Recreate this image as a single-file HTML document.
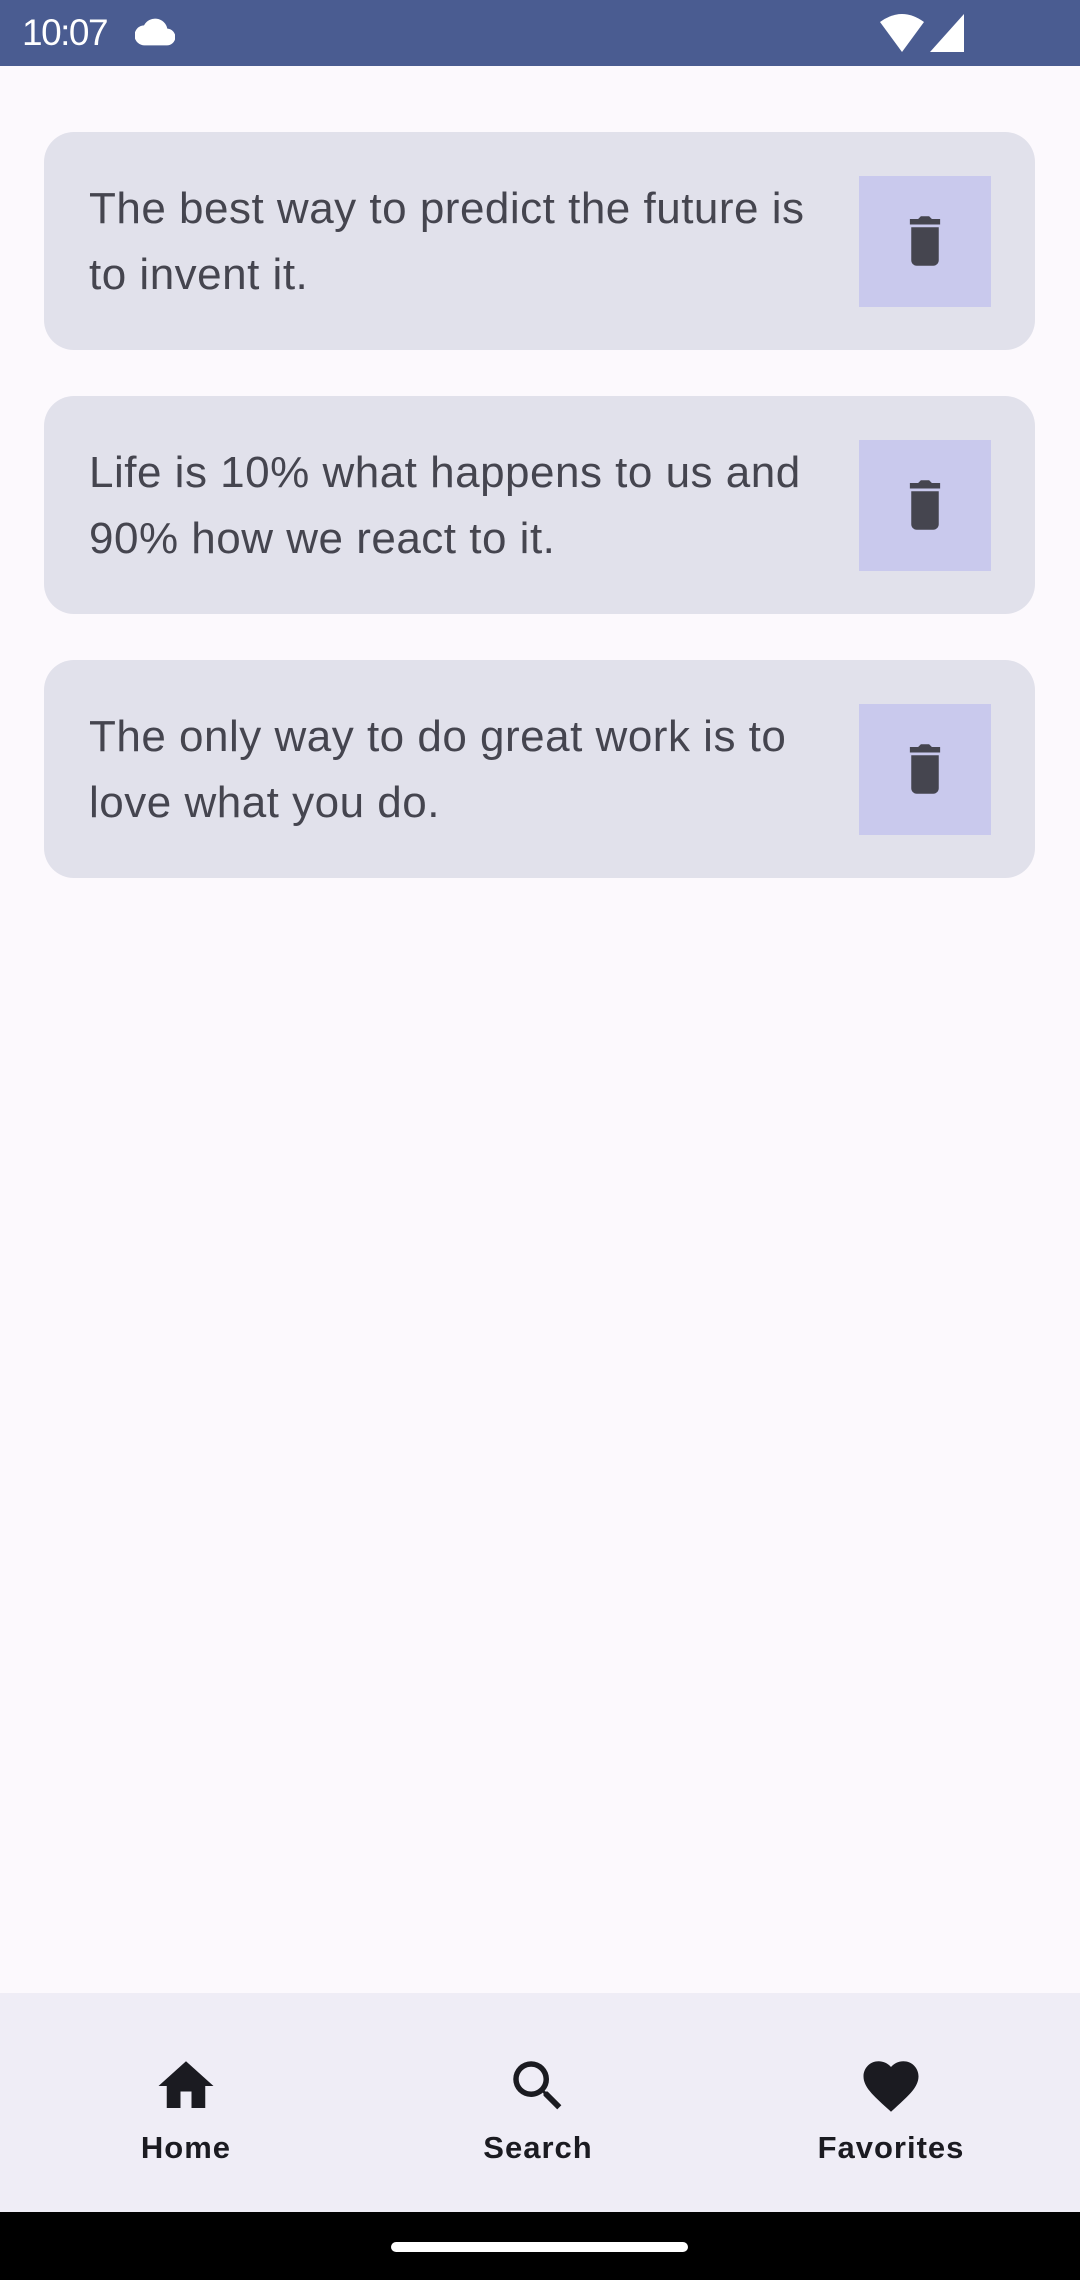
<!DOCTYPE html>
<html><head><meta charset="utf-8"><style>
*{margin:0;padding:0;box-sizing:border-box}
body{width:1080px;height:2280px;background:#fcf9fd;font-family:"Liberation Sans",sans-serif;position:relative;overflow:hidden}
.sb{position:absolute;top:0;left:0;width:1080px;height:66px;background:#4a5c91;color:#fff}
.sb .t{position:absolute;left:22px;top:12px;font-size:37px;letter-spacing:-1.5px}
.card{position:absolute;left:44px;width:991px;height:218px;background:#e1e1eb;border-radius:30px}
.card p{position:absolute;left:45px;top:44px;width:740px;font-size:44px;line-height:66px;color:#45454f;letter-spacing:0.5px}
.del{position:absolute;left:815px;top:44px;width:132px;height:131px;background:#c9c9ed}
.del svg{position:absolute;left:33px;top:32px}
.nav{position:absolute;left:0;top:1993px;width:1080px;height:219px;background:#efedf6}
.it{position:absolute;top:0;width:300px;text-align:center;color:#1b1b21}
.it svg{position:absolute;top:60px}
.it span{position:absolute;top:137px;left:0;width:300px;font-size:31px;font-weight:bold;letter-spacing:1px}
.gb{position:absolute;left:0;top:2212px;width:1080px;height:68px;background:#000}
.gb div{position:absolute;left:391px;top:30px;width:297px;height:10px;border-radius:5px;background:#fff}
</style></head><body>
<div class="sb"><span class="t">10:07</span>
<svg style="position:absolute;left:135px;top:18px" width="40" height="28" viewBox="0 0 24 16"><path fill="#fff" d="M19.4 6A7.5 7.5 0 0 0 5.4 4 6 6 0 0 0 6 16h13a5 5 0 0 0 .4-10z"/></svg>
<svg style="position:absolute;left:880px;top:14px" width="84" height="38" viewBox="0 0 84 38"><path fill="#fff" d="M0 8Q22-8 44 8L22 38Z"/><path fill="#fff" d="M84 0V38H50Z"/></svg>
</div>
<div class="card" style="top:132px"><p>The best way to predict the future is to invent it.</p><div class="del"><svg width="66" height="66" viewBox="0 0 24 24"><path fill="#45454f" d="M7 19c0 1.1.9 2 2 2h6c1.1 0 2-.9 2-2V7H7v12zM17.5 4h-3l-1-1h-3l-1 1h-3v2h11V4z"/></svg></div></div>
<div class="card" style="top:396px"><p>Life is 10% what happens to us and 90% how we react to it.</p><div class="del"><svg width="66" height="66" viewBox="0 0 24 24"><path fill="#45454f" d="M7 19c0 1.1.9 2 2 2h6c1.1 0 2-.9 2-2V7H7v12zM17.5 4h-3l-1-1h-3l-1 1h-3v2h11V4z"/></svg></div></div>
<div class="card" style="top:660px"><p>The only way to do great work is to love what you do.</p><div class="del"><svg width="66" height="66" viewBox="0 0 24 24"><path fill="#45454f" d="M7 19c0 1.1.9 2 2 2h6c1.1 0 2-.9 2-2V7H7v12zM17.5 4h-3l-1-1h-3l-1 1h-3v2h11V4z"/></svg></div></div>
<div class="nav">
<div class="it" style="left:36px"><svg style="left:117px" width="66" height="66" viewBox="0 0 24 24"><path fill="#1b1b21" d="M10 20v-6h4v6h5v-8h3L12 3 2 12h3v8z"/></svg><span>Home</span></div>
<div class="it" style="left:388px"><svg style="left:117px" width="66" height="66" viewBox="0 0 24 24"><path fill="#1b1b21" d="M15.5 14h-.79l-.28-.27A6.47 6.47 0 0 0 16 9.5 6.5 6.5 0 1 0 9.5 16c1.61 0 3.09-.59 4.23-1.57l.27.28v.79l5 4.99L20.49 19l-4.99-5zm-6 0C7.01 14 5 11.99 5 9.5S7.01 5 9.5 5 14 7.01 14 9.5 11.99 14 9.5 14z"/></svg><span>Search</span></div>
<div class="it" style="left:741px"><svg style="left:117px" width="66" height="66" viewBox="0 0 24 24"><path fill="#1b1b21" d="M12 21.35l-1.45-1.32C5.4 15.36 2 12.28 2 8.5 2 5.42 4.42 3 7.5 3c1.74 0 3.41.81 4.5 2.09C13.09 3.81 14.76 3 16.5 3 19.58 3 22 5.42 22 8.5c0 3.78-3.4 6.86-8.55 11.54L12 21.35z"/></svg><span>Favorites</span></div>
</div>
<div class="gb"><div></div></div>
</body></html>
